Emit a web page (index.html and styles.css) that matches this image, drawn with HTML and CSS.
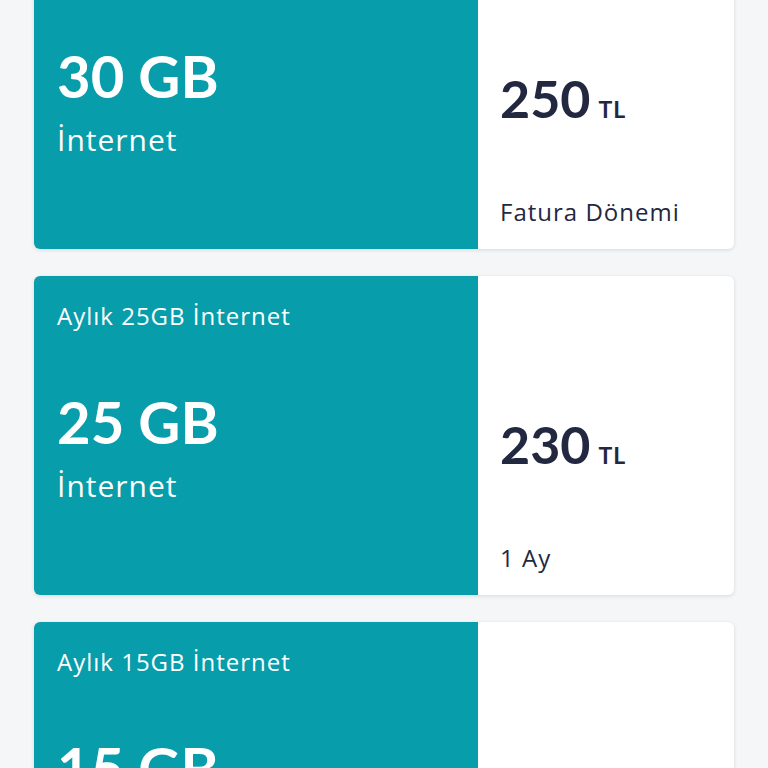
FILE: index.html
```html
<!DOCTYPE html>
<html lang="tr">
<head>
    <meta charset="UTF-8">
    <meta name="viewport" content="width=device-width, initial-scale=1.0">
    <title>Paketler</title>
    <link rel="stylesheet" href="styles.css">
</head>
<body>
    <div class="package-list">
        <div class="package-card">
            <div class="package-info">
                <div class="package-title">Aylık 30GB İnternet</div>
                <div class="package-amount">30 GB</div>
                <div class="package-type">İnternet</div>
            </div>
            <div class="package-price">
                <div class="price-row">
                    <span class="price-value">250</span>
                    <span class="price-unit">TL</span>
                </div>
                <div class="price-period">Fatura Dönemi</div>
            </div>
        </div>

        <div class="package-card">
            <div class="package-info">
                <div class="package-title">Aylık 25GB İnternet</div>
                <div class="package-amount">25 GB</div>
                <div class="package-type">İnternet</div>
            </div>
            <div class="package-price">
                <div class="price-row">
                    <span class="price-value">230</span>
                    <span class="price-unit">TL</span>
                </div>
                <div class="price-period">1 Ay</div>
            </div>
        </div>

        <div class="package-card">
            <div class="package-info">
                <div class="package-title">Aylık 15GB İnternet</div>
                <div class="package-amount">15 GB</div>
                <div class="package-type">İnternet</div>
            </div>
            <div class="package-price">
                <div class="price-row">
                    <span class="price-value">150</span>
                    <span class="price-unit">TL</span>
                </div>
                <div class="price-period">1 Ay</div>
            </div>
        </div>
    </div>
</body>
</html>
```

FILE: styles.css
```css
body {
  margin: 0;
  background-color: #f5f6f8;
  font-family: Lato, "Noto Sans", sans-serif;
  overflow: hidden;
}

.package-list {
  display: flex;
  flex-direction: column;
  gap: 27px;
  padding: 0 34px;
  margin-top: -70px;
}

.package-card {
  display: grid;
  grid-template-columns: 444px 1fr;
  height: 319px;
  border-radius: 6px;
  overflow: hidden;
  background-color: #fff;
  box-shadow: 0 1px 4px rgba(0,0,0,0.12);
}

.package-info {
  background-color: #079dab;
  color: #fff;
  padding: 28px 23px 0;
}

.package-title {
  font-family: "Open Sans", sans-serif;
  font-size: 24px;
  letter-spacing: 1px;
  line-height: 1;
}

.package-amount {
  margin-top: 65px;
  font-size: 58px;
  font-weight: 700;
  line-height: 1;
}

.package-type {
  margin-top: 20px;
  font-family: "Open Sans", sans-serif;
  font-size: 30px;
  letter-spacing: 1px;
  line-height: 1;
}

.package-price {
  display: flex;
  flex-direction: column;
  padding: 142px 22px 25px;
  color: #22283f;
}

.price-row {
  display: flex;
  align-items: baseline;
  gap: 8px;
}

.price-value {
  font-size: 52px;
  font-weight: 700;
  line-height: 1;
}

.price-unit {
  font-size: 23px;
  font-weight: 700;
  letter-spacing: 1px;
  line-height: 1;
}

.price-period {
  margin-top: auto;
  font-family: "Open Sans", sans-serif;
  font-size: 24px;
  letter-spacing: 1px;
  line-height: 1;
}
```
